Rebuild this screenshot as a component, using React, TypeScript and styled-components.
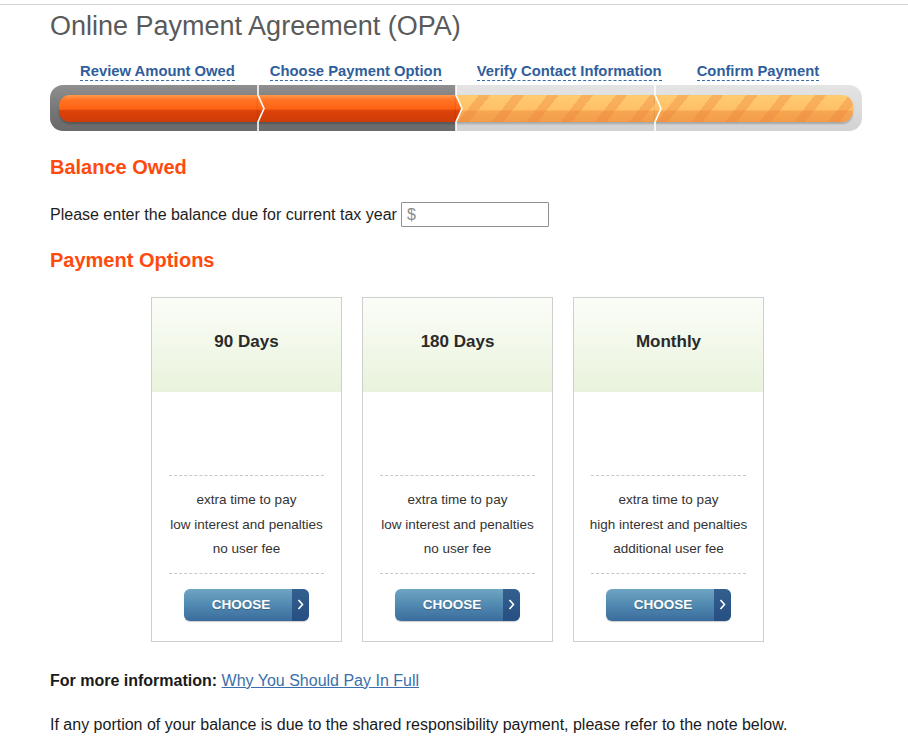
import React, { FC } from 'react';
import styled, { createGlobalStyle, css } from 'styled-components';

const GlobalStyle = createGlobalStyle`
  html, body {
    margin: 0;
    padding: 0;
    background: #fff;
  }
  body {
    font-family: 'Liberation Sans', Arial, sans-serif;
    color: #1e1e1e;
  }
`;

const steps = [
  { label: 'Review Amount Owed', done: true },
  { label: 'Choose Payment Option', done: true },
  { label: 'Verify Contact Information', done: false },
  { label: 'Confirm Payment', done: false },
];

const options = [
  { title: '90 Days', lines: ['extra time to pay', 'low interest and penalties', 'no user fee'] },
  { title: '180 Days', lines: ['extra time to pay', 'low interest and penalties', 'no user fee'] },
  { title: 'Monthly', lines: ['extra time to pay', 'high interest and penalties', 'additional user fee'] },
];

const doneFill = 'linear-gradient(#ff9a4c 0%, #ff7424 18%, #ff6214 52%, #dc430a 58%, #cf3c08 100%)';
const todoFill = `repeating-linear-gradient(128deg, transparent 0 18px, rgba(236, 130, 60, 0.35) 18px 27px),
  linear-gradient(#ffcb72 0%, #ffc066 55%, #f7a650 60%, #f29c4a 100%)`;

const TopRule = styled.div`
  margin-top: 4px;
  border-top: 1px solid #d6d6d6;
`;

const Content = styled.div`
  width: 812px;
  padding-left: 50px;
`;

const Title = styled.h1`
  margin: 5px 0 0;
  font-size: 27px;
  line-height: 32px;
  font-weight: 400;
  color: #5a5a5a;
`;

const StepLabels = styled.div`
  display: flex;
  gap: 35px;
  padding-left: 30px;
  margin-top: 20px;
`;

const StepLabel = styled.span`
  font-size: 14.8px;
  line-height: 18px;
  font-weight: 700;
  color: #2f5e9c;
  border-bottom: 1px dashed #3a6aa8;
`;

const Track = styled.div`
  display: flex;
  height: 46px;
  margin-top: 4px;
  border-radius: 13px;
  overflow: hidden;
`;

const Segment = styled.div<{ $done: boolean; $first: boolean; $last: boolean }>`
  position: relative;
  flex: 1 1 0;
  padding: 10px 0 9px;
  padding-left: ${({ $first }) => ($first ? 9 : 0)}px;
  padding-right: ${({ $last }) => ($last ? 9 : 0)}px;
  background: ${({ $done }) => ($done
    ? 'linear-gradient(#8f8f8f, #747474 60%, #6a6a6a)'
    : 'linear-gradient(#e4e4e4, #dadada 60%, #d2d2d2)')};
`;

const Fill = styled.div<{ $done: boolean; $first: boolean; $last: boolean }>`
  height: 27px;
  background: ${({ $done }) => ($done ? doneFill : todoFill)};
  box-shadow: 0 2px 2px rgba(0, 0, 0, 0.22);
  ${({ $first }) => $first && css`border-radius: 11px 0 0 11px;`}
  ${({ $last }) => $last && css`border-radius: 0 11px 11px 0;`}
`;

const Divider = styled.svg`
  position: absolute;
  left: -1px;
  top: 0;
  z-index: 1;
  overflow: visible;
`;

const SectionTitle = styled.h2<{ $top: number }>`
  margin: ${({ $top }) => $top}px 0 0;
  font-size: 20px;
  line-height: 24px;
  font-weight: 700;
  color: #ff4a0e;
`;

const BalanceRow = styled.label`
  display: flex;
  align-items: center;
  gap: 4px;
  margin-top: 23px;
  font-size: 16px;
`;

const AmountInput = styled.input`
  box-sizing: border-box;
  width: 148px;
  height: 25px;
  padding: 0 5px;
  border: 1px solid #8f8f8f;
  border-radius: 1px;
  font-family: 'Liberation Sans', Arial, sans-serif;
  font-size: 16px;
  color: #333;
  &::placeholder {
    color: #8a8a8a;
  }
`;

const Cards = styled.div`
  display: flex;
  justify-content: center;
  gap: 20px;
  margin-top: 25px;
  padding-left: 3px;
`;

const Card = styled.div`
  width: 189px;
  border: 1px solid #cfcfcf;
  background: #fff;
`;

const CardHead = styled.div`
  box-sizing: border-box;
  height: 94px;
  padding-top: 34px;
  text-align: center;
  font-size: 17px;
  line-height: 20px;
  font-weight: 700;
  color: #2a2a2a;
  background: linear-gradient(#fbfdf8, #e9f3dc);
`;

const CardBody = styled.div`
  padding: 83px 17px 0 17px;
`;

const DashedRule = styled.hr`
  margin: 0;
  border: none;
  border-top: 1px dashed #c8c8c8;
`;

const Features = styled.ul`
  margin: 0 -12px;
  padding: 12px 0 11px;
  list-style: none;
  text-align: center;
  white-space: nowrap;
  font-size: 13.5px;
  line-height: 24.5px;
  color: #333;
`;

const ButtonWrap = styled.div`
  display: flex;
  justify-content: center;
  padding: 15px 0 20px;
`;

const ChooseButton = styled.button`
  display: flex;
  width: 125px;
  height: 32px;
  padding: 0;
  border: none;
  border-radius: 6px;
  overflow: hidden;
  cursor: pointer;
  background: linear-gradient(#6fa5c3, #5089b1 50%, #3b6c9c);
  box-shadow: 0 1px 1px rgba(0, 0, 0, 0.2);
`;

const ButtonText = styled.span`
  flex: 1;
  align-self: center;
  padding-left: 6px;
  font-family: 'Liberation Sans', Arial, sans-serif;
  font-size: 13.5px;
  font-weight: 700;
  color: #fff;
  text-shadow: 0 1px 1px rgba(0, 0, 0, 0.25);
`;

const ButtonArrow = styled.span`
  display: flex;
  align-items: center;
  justify-content: center;
  width: 17px;
  background: linear-gradient(#33608f, #264f82);
`;

const InfoLine = styled.p<{ $top: number }>`
  margin: ${({ $top }) => $top}px 0 0;
  font-size: 16px;
  line-height: 20px;
  color: #1a1a1a;
`;

const InfoLink = styled.a`
  color: #3c6fa9;
  text-decoration: underline;
`;

const ProgressDivider: FC<{ id: string; done: boolean }> = ({ id, done }) => (
  <Divider width='10' height='46' viewBox='0 0 10 46'>
    <defs>
      <linearGradient id={id} x1='0' y1='10' x2='0' y2='37' gradientUnits='userSpaceOnUse'>
        {done ? (
          <>
            <stop offset='0' stopColor='#ff8a3a' />
            <stop offset='0.52' stopColor='#ff6214' />
            <stop offset='0.58' stopColor='#dc430a' />
            <stop offset='1' stopColor='#cf3c08' />
          </>
        ) : (
          <>
            <stop offset='0' stopColor='#ffcb72' />
            <stop offset='0.55' stopColor='#ffc066' />
            <stop offset='0.6' stopColor='#f7a650' />
            <stop offset='1' stopColor='#f29c4a' />
          </>
        )}
      </linearGradient>
    </defs>
    <polygon points='1,10 7,23.5 1,37' fill={`url(#${id})`} />
    <polyline points='1,0 1,10 7,23.5 1,37 1,46' fill='none' stroke='#fff' strokeWidth='1.6' />
  </Divider>
);

const App: FC = () => (
  <>
    <GlobalStyle />
    <TopRule />
    <Content>
      <Title>Online Payment Agreement (OPA)</Title>
      <StepLabels>
        {steps.map((step) => (
          <StepLabel key={step.label}>{step.label}</StepLabel>
        ))}
      </StepLabels>
      <Track>
        {steps.map((step, i) => (
          <Segment key={step.label} $done={step.done} $first={i === 0} $last={i === steps.length - 1}>
            {i > 0 && <ProgressDivider id={`chev${i}`} done={steps[i - 1].done} />}
            <Fill $done={step.done} $first={i === 0} $last={i === steps.length - 1} />
          </Segment>
        ))}
      </Track>

      <SectionTitle $top={24}>Balance Owed</SectionTitle>
      <BalanceRow>
        Please enter the balance due for current tax year
        <AmountInput type='text' placeholder='$' />
      </BalanceRow>

      <SectionTitle $top={21}>Payment Options</SectionTitle>
      <Cards>
        {options.map((option) => (
          <Card key={option.title}>
            <CardHead>{option.title}</CardHead>
            <CardBody>
              <DashedRule />
              <Features>
                {option.lines.map((line) => (
                  <li key={line}>{line}</li>
                ))}
              </Features>
              <DashedRule />
            </CardBody>
            <ButtonWrap>
              <ChooseButton type='button'>
                <ButtonText>CHOOSE</ButtonText>
                <ButtonArrow>
                  <svg width='7' height='11' viewBox='0 0 7 11'>
                    <polyline points='1.5,1 5.5,5.5 1.5,10' fill='none' stroke='#fff' strokeWidth='1.6' />
                  </svg>
                </ButtonArrow>
              </ChooseButton>
            </ButtonWrap>
          </Card>
        ))}
      </Cards>

      <InfoLine $top={29}>
        <b>For more information:</b> <InfoLink href='#'>Why You Should Pay In Full</InfoLink>
      </InfoLine>
      <InfoLine $top={24}>
        If any portion of your balance is due to the shared responsibility payment, please refer to the note below.
      </InfoLine>
    </Content>
  </>
);

export default App;
